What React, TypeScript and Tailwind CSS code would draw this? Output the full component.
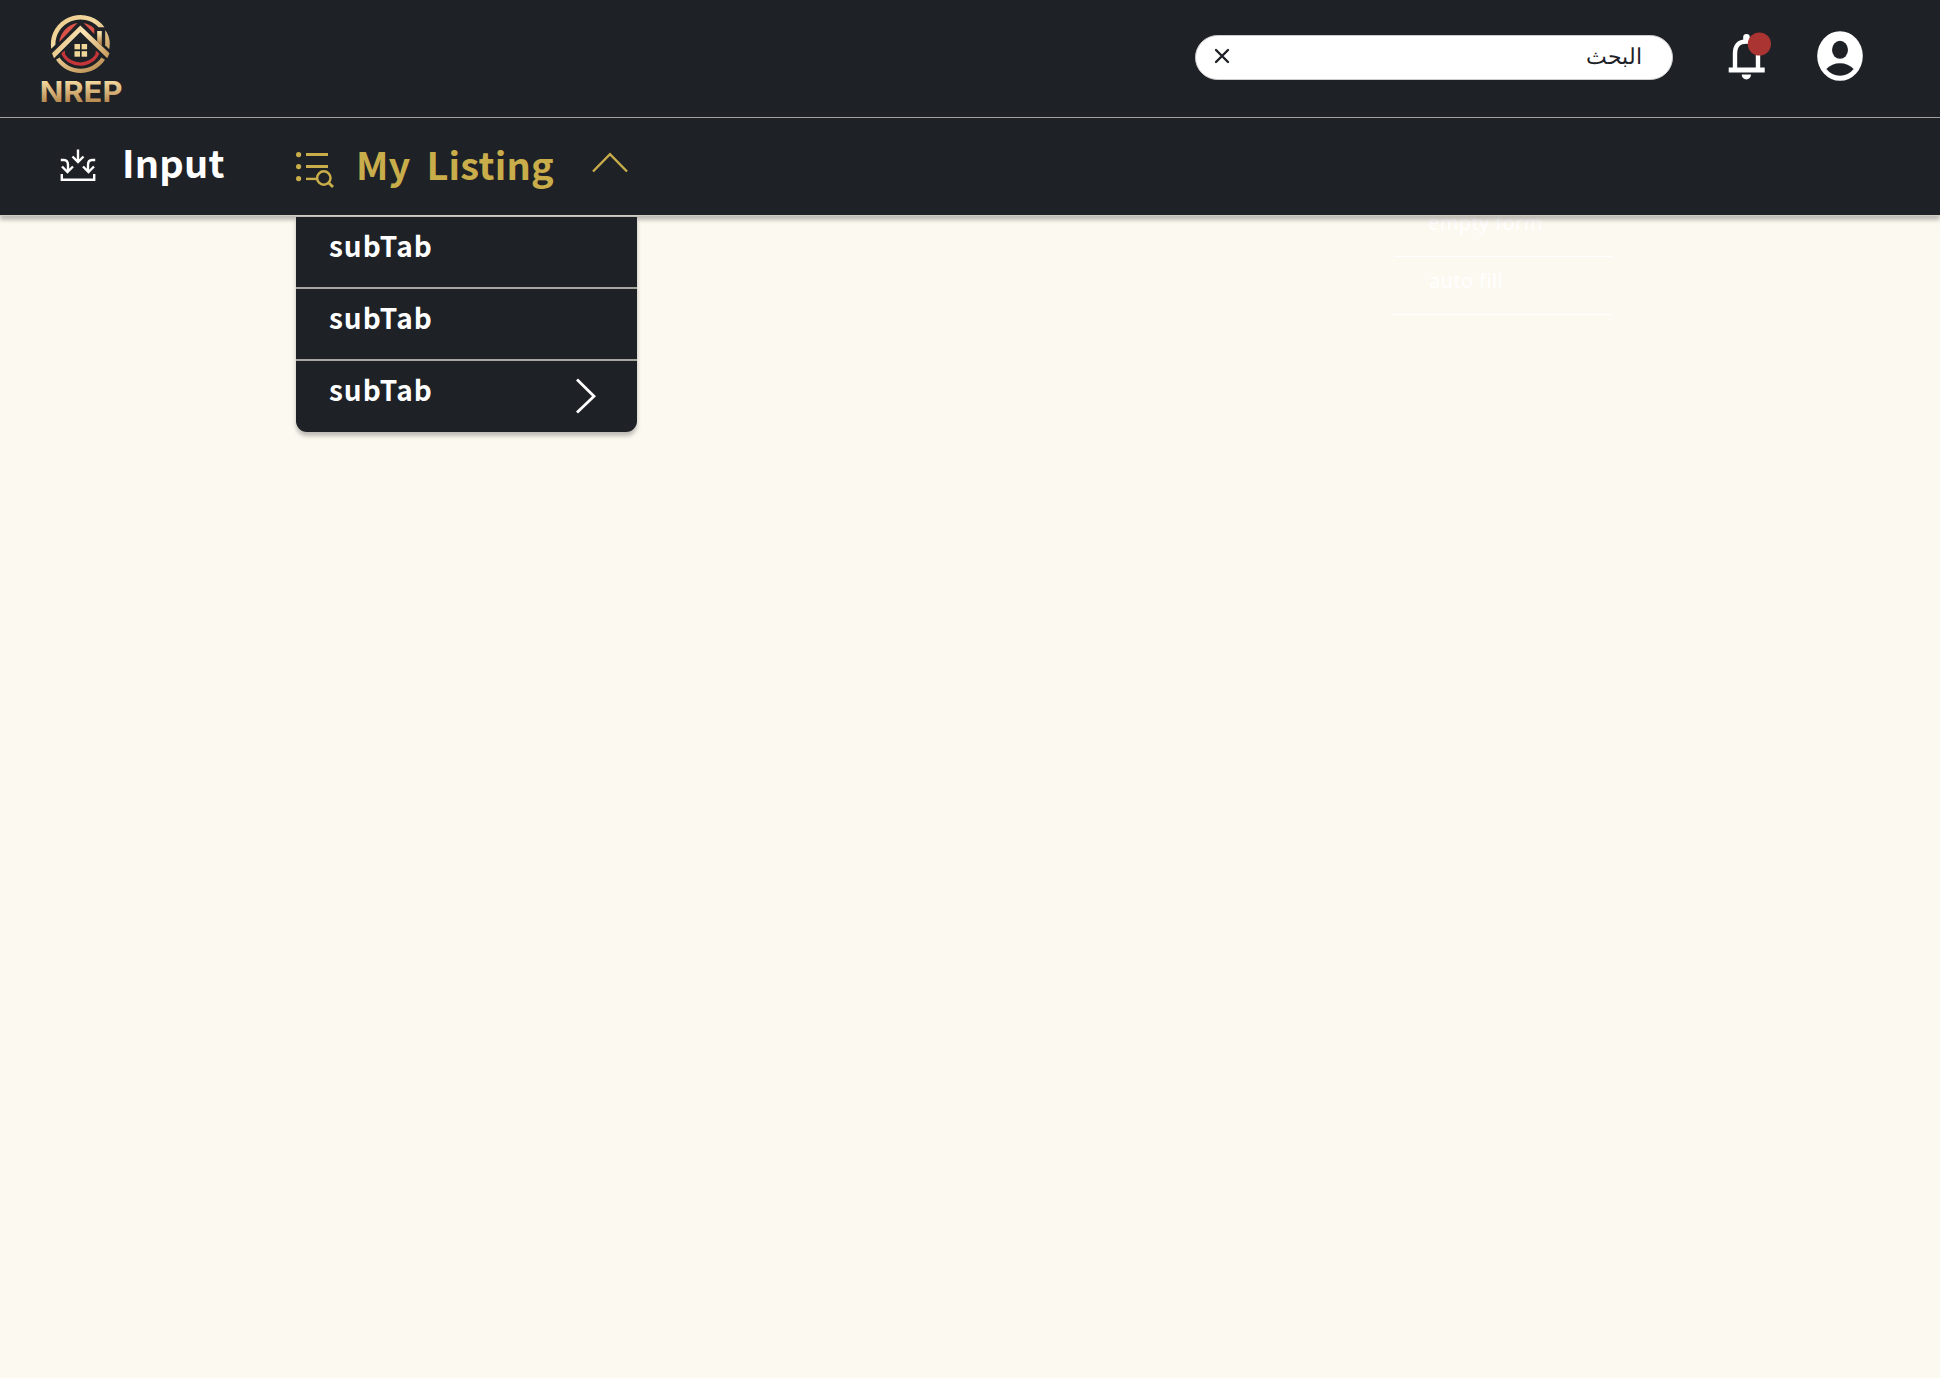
import React from "react";

const subTabs = [
  { label: "subTab", nested: false },
  { label: "subTab", nested: false },
  { label: "subTab", nested: true },
];

function Logo() {
  return (
    <svg width="110" height="116" viewBox="0 0 110 116" className="shrink-0" aria-label="NREP">
      <defs>
        <linearGradient id="gold" x1="0" y1="0" x2="0" y2="1">
          <stop offset="0.15" stopColor="#f8dfa6" />
          <stop offset="0.85" stopColor="#b3844a" />
        </linearGradient>
        <linearGradient id="goldRing" gradientUnits="userSpaceOnUse" x1="30" y1="14" x2="70" y2="74">
          <stop offset="0" stopColor="#eccb8b" />
          <stop offset="0.35" stopColor="#f3d9a2" />
          <stop offset="1" stopColor="#b98b4e" />
        </linearGradient>
        <linearGradient id="roof" gradientUnits="userSpaceOnUse" x1="22" y1="26" x2="80" y2="60">
          <stop offset="0" stopColor="#d9ad68" />
          <stop offset="0.45" stopColor="#fbe6b5" />
          <stop offset="1" stopColor="#c59655" />
        </linearGradient>
      </defs>
      <g transform="translate(0 -0.8)">
        <path d="M21.2 49.5Q20.6 46 21 42A29.6 29.3 0 0 1 74.5 28H68.5A25 25 0 0 0 25.4 45.5Z" fill="url(#goldRing)" />
        <path d="M75.2 31C79.5 36.5 80.6 43 79.2 50L75.2 46Z" fill="url(#goldRing)" />
        <path d="M26 60.5L29.6 58.2A25 25 0 0 0 71.4 58.2L75 60.5A29.3 29.3 0 0 1 26 60.5Z" fill="url(#goldRing)" />
      </g>
      <path d="M29.3 42A21.5 21.5 0 0 1 47.5 23.1Z" fill="#dc5247" />
      <path d="M53.5 23.1A21.5 21.5 0 0 1 64.3 28.6V34Z" fill="#dc5247" />
      <path d="M31.5 54.2V53L34.8 50.4L35.2 54.5A17.5 16 0 0 0 65.4 54.5L65.8 50.4L69.3 53.4A20.6 20 0 0 1 31.5 54.2Z" fill="#c53539" />
      <path d="M67.2 31H71.8V46L67.2 41.5Z" fill="url(#gold)" />
      <path d="M50.3 25.5L79.5 53.2L77.3 58.3L50.3 32L24 58.3L22 53.2Z" fill="url(#roof)" />
      <g fill="#f1d69a">
        <rect x="44.5" y="44" width="5.5" height="5.3" />
        <rect x="51.6" y="44" width="5.5" height="5.3" />
        <rect x="44.5" y="51.2" width="5.5" height="5.5" />
        <rect x="51.6" y="51.2" width="5.5" height="5.5" />
      </g>
      <text
        x="9.8"
        y="102"
        textLength="82.6"
        lengthAdjust="spacingAndGlyphs"
        fill="url(#gold)"
        className="text-[29px] font-bold [font-family:Inter,sans-serif]"
      >
        NREP
      </text>
    </svg>
  );
}

function InputIcon() {
  return (
    <svg width="36" height="34" viewBox="0 0 36 34" fill="none" stroke="#fff" strokeWidth="2.4" className="shrink-0">
      <path d="M18 .5V13M12.5 7.5L18 13L23.5 7.5" />
      <path d="M.8 11H4Q8 11 8 16V23M2 17.5L7.5 23L13 17.5" />
      <path d="M35.2 11H32Q28 11 28 16V23M23 17.5L28.5 23L34 17.5" />
      <path d="M1.8 25V30.8H34.2V25" />
    </svg>
  );
}

function ListIcon() {
  return (
    <svg width="39" height="38" viewBox="0 0 39 38" fill="none" stroke="#c8ad4a" className="shrink-0">
      <g fill="#c8ad4a" stroke="none">
        <circle cx="2.6" cy="3.6" r="2.6" />
        <circle cx="2.6" cy="15.6" r="2.6" />
        <circle cx="2.6" cy="27.6" r="2.6" />
      </g>
      <path d="M10 3.5H32M10 15.5H32" strokeWidth="2.9" />
      <path d="M10 27.9H21" strokeWidth="2.4" />
      <circle cx="27.8" cy="27" r="6.7" strokeWidth="2.5" />
      <path d="M32.6 31.8L37 36" strokeWidth="2.9" />
    </svg>
  );
}

function BellIcon() {
  return (
    <svg width="44" height="50" viewBox="0 0 44 50" fill="none" className="shrink-0">
      <path d="M7 37V22Q7 9.5 18.5 9.5Q30 9.5 30 22V37" stroke="#fff" strokeWidth="4.4" />
      <rect x="15.2" y="2" width="6.6" height="8" rx="3.3" fill="#fff" />
      <path d="M.7 38H36.7" stroke="#fff" strokeWidth="4.8" />
      <path d="M13.7 42.5H23A4.65 5 0 0 1 13.7 42.5Z" fill="#fff" />
      <circle cx="31.4" cy="12" r="11.6" fill="#a93432" />
    </svg>
  );
}

function UserIcon() {
  return (
    <svg width="46" height="50" viewBox="0 0 46 50" className="shrink-0">
      <ellipse cx="23" cy="25" rx="22.8" ry="24.8" fill="#fff" />
      <ellipse cx="23" cy="18.8" rx="8" ry="9" fill="#1e2126" />
      <path d="M9.3 38Q15 32.3 23 32.3Q31 32.3 36.7 38Q31 44.8 23 44.8Q15 44.8 9.3 38Z" fill="#1e2126" />
    </svg>
  );
}

function SubMenu() {
  return (
    <ul className="absolute left-0 top-[107px] w-[341px] overflow-hidden rounded-b-[11px] bg-[#1e2126] text-white shadow-[0_4px_4px_rgba(0,0,0,0.25)]">
      {subTabs.map((tab, i) => (
        <li
          key={i}
          className="flex h-[72px] items-start justify-between border-b-2 border-[#a6a69f] pl-[33px] pr-[41px] last:h-[71px] last:border-b-0"
        >
          <span className="pt-[8px] text-[28px] font-bold leading-[40px] tracking-[1px]">{tab.label}</span>
          {tab.nested && (
            <svg width="21" height="36" viewBox="0 0 21 36" fill="none" stroke="#fff" strokeWidth="2.8" className="mt-[17px]">
              <path d="M2 1.5L19 18.3L2 34.5" />
            </svg>
          )}
        </li>
      ))}
    </ul>
  );
}

export default function App() {
  return (
    <div className="h-[1378px] w-[1940px] overflow-hidden bg-[#fcf9f0] [font-family:'Noto_Sans_CJK_SC',sans-serif]">
      <div className="relative z-10 h-[216px] border-b border-[#d2cbc3] bg-[#1e2126] shadow-[0_4px_4px_rgba(0,0,0,0.25)]">
        <header className="flex h-[118px] items-start border-b border-[#a3a29e] pl-[30px] pr-[77px]">
          <Logo />
          <div className="ml-auto mr-[55px] mt-[35px] flex h-[45px] w-[478px] items-center justify-between rounded-full border border-[#ccc] bg-white pl-[19px] pr-[30px] text-[#1e2126]">
            <svg width="14" height="14" viewBox="0 0 14 14" stroke="#1e2126" strokeWidth="2.4" strokeLinecap="round" className="-mt-[3px] overflow-visible">
              <path d="M1 1L13 13M13 1L1 13" />
            </svg>
            <span dir="rtl" className="-mt-[5px] text-[22px] leading-[30px] [font-family:'Noto_Sans',sans-serif]">البحث</span>
          </div>
          <div className="mt-[31px] flex gap-[45px]">
            <div className="mt-px">
              <BellIcon />
            </div>
            <UserIcon />
          </div>
        </header>
        <nav className="flex h-[97px] items-start pl-[60px] text-white">
          <div className="flex">
            <div className="mt-[31px]">
              <InputIcon />
            </div>
            <span className="ml-[26px] mt-[16px] w-[174px] text-[38px] font-bold leading-[56px] tracking-[0.2px]">Input</span>
          </div>
          <div className="relative -mt-[8px] flex text-[#c8ad4a]">
            <div className="mt-[41px]">
              <ListIcon />
            </div>
            <span className="ml-[21px] mt-[26px] w-[236px] whitespace-nowrap text-[38px] font-bold leading-[56px] tracking-[0.2px] [word-spacing:7px]">My Listing</span>
            <svg width="36" height="21" viewBox="0 0 36 21" fill="none" stroke="#c8ad4a" strokeWidth="2.4" className="mt-[42px]">
              <path d="M1 19.5L18 2.2L35 19.5" />
            </svg>
            <SubMenu />
          </div>
        </nav>
      </div>
      <div className="ml-[1394px] w-[218px] text-[20px] leading-[28px] tracking-[0.4px] text-white [font-family:'Noto_Sans',sans-serif]">
        <div className="h-[41px] border-b border-white pl-[34px]">
          <span className="block -translate-y-[7px]">empty form</span>
        </div>
        <div className="-ml-[2px] h-[58px] border-b border-white pl-[37px] pt-[10px]">auto fill</div>
      </div>
    </div>
  );
}
